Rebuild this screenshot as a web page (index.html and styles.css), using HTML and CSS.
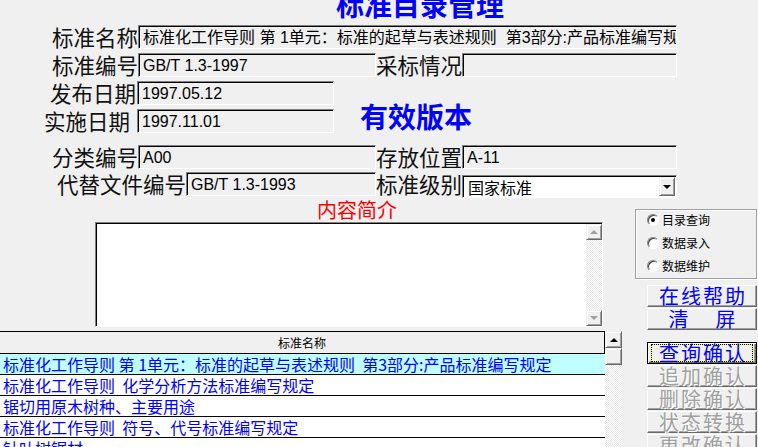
FILE: index.html
```html
<!DOCTYPE html>
<html lang="zh-CN">
<head>
<meta charset="utf-8">
<title>标准目录管理</title>
<link rel="stylesheet" href="styles.css">
</head>
<body>
<div class="form">
  <h1 class="title">标准目录管理</h1>

  <div class="row gap4">
    <span class="lbl w138">标准名称</span>
    <div class="field w539">标准化工作导则 第 1单元：标准的起草与表述规则  第3部分:产品标准编写规定</div>
  </div>

  <div class="row gap4">
    <span class="lbl w138">标准编号</span>
    <div class="field w238">GB/T 1.3-1997</div>
    <span class="lbl w86">采标情况</span>
    <div class="field w215"></div>
  </div>

  <div class="dates">
    <div class="date-col">
      <div class="row gap4">
        <span class="lbl w137 pr1">发布日期</span>
        <div class="field w197">1997.05.12</div>
      </div>
      <div class="row">
        <span class="lbl w137 pr7">实施日期</span>
        <div class="field w197">1997.11.01</div>
      </div>
    </div>
    <div class="subtitle">有效版本</div>
  </div>

  <div class="row gap3">
    <span class="lbl w138">分类编号</span>
    <div class="field w238">A00</div>
    <span class="lbl w86">存放位置</span>
    <div class="field w215">A-11</div>
  </div>

  <div class="row gap3">
    <span class="lbl w186">代替文件编号</span>
    <div class="field w190">GB/T 1.3-1993</div>
    <span class="lbl w86">标准级别</span>
    <div class="select">
      <span class="select-text">国家标准</span>
      <span class="select-btn"><i class="arrow-down"></i></span>
    </div>
  </div>

  <div class="lower">
    <div class="left">
      <div class="intro-title">内容简介</div>
      <div class="memo">
        <div class="memo-text"></div>
        <div class="vscroll memo-sb">
          <div class="sb-btn"><i class="arrow-up dis"></i></div>
          <div class="sb-track"></div>
          <div class="sb-btn"><i class="arrow-down dis"></i></div>
        </div>
      </div>
      <div class="grid-wrap">
        <div class="grid">
          <div class="grid-head">标准名称</div>
          <div class="grid-row sel">标准化工作导则 第 1单元：标准的起草与表述规则  第3部分:产品标准编写规定</div>
          <div class="grid-row">标准化工作导则  化学分析方法标准编写规定</div>
          <div class="grid-row">锯切用原木树种、主要用途</div>
          <div class="grid-row">标准化工作导则  符号、代号标准编写规定</div>
          <div class="grid-row">针叶树锯材</div>
        </div>
        <div class="vscroll grid-sb">
          <div class="sb-btn big"><i class="arrow-up"></i></div>
          <div class="sb-btn big"></div>
          <div class="sb-track"></div>
        </div>
      </div>
    </div>

    <div class="right">
      <div class="radio-group">
        <div class="radios">
          <div class="radio"><span class="radio-dot on"></span>目录查询</div>
          <div class="radio"><span class="radio-dot"></span>数据录入</div>
          <div class="radio"><span class="radio-dot"></span>数据维护</div>
        </div>
      </div>
      <div class="btns">
        <div class="btn"><span class="btn-text">在线帮助</span></div>
        <div class="btn split"><span>清</span><span>屏</span></div>
        <div class="btn default mt11"><span class="focus"><span class="btn-text">查询确认</span></span></div>
        <div class="btn disabled"><span class="btn-text">追加确认</span></div>
        <div class="btn disabled"><span class="btn-text">删除确认</span></div>
        <div class="btn disabled"><span class="btn-text">状态转换</span></div>
        <div class="btn disabled"><span class="btn-text">更改确认</span></div>
      </div>
    </div>
  </div>
</div>
</body>
</html>
```

FILE: styles.css
```css
* { box-sizing: border-box; }
html, body { margin: 0; padding: 0; }
body {
  background: #f0f0f0;
  font-family: "Noto Sans CJK SC", "Liberation Sans", sans-serif;
  color: #000;
}
.form { width: 758px; height: 447px; overflow: hidden; }

.title {
  margin: -10px 0 0 0;
  height: 35px;
  padding-left: 336px;
  font-size: 28px;
  line-height: 28px;
  font-weight: bold;
  color: #0000ff;
}

.row { display: flex; align-items: center; height: 24px; }
.gap4 { margin-bottom: 4px; }
.gap3 { margin-bottom: 3px; }

.lbl {
  flex: none;
  font-size: 21.5px;
  line-height: 24px;
  text-align: right;
  white-space: nowrap;
  color: #111;
}
.w138 { width: 138px; }
.w137 { width: 137px; }
.w186 { width: 186px; }
.w86 { width: 86px; }
.pr1 { padding-right: 1px; }
.pr7 { padding-right: 7px; }

.field {
  flex: none;
  height: 24px;
  border: 1px solid;
  border-color: #808080 #fff #fff #808080;
  box-shadow: inset 1px 1px 0 #000;
  font-family: "Liberation Sans", "Noto Sans CJK SC", sans-serif;
  font-size: 16px;
  line-height: 21px;
  padding: 1px 0 0 4px;
  white-space: pre;
  overflow: hidden;
}
.w539 { width: 539px; }
.w238 { width: 238px; }
.w215 { width: 215px; }
.w197 { width: 197px; }
.w190 { width: 190px; }

.dates { display: flex; margin-bottom: 12px; }
.date-col { flex: none; }
.subtitle {
  margin: 21px 0 0 26px;
  font-size: 28px;
  line-height: 28px;
  font-weight: bold;
  color: #0000ff;
}

.select {
  flex: none;
  align-self: flex-start;
  margin-top: 3px;
  width: 215px;
  height: 23px;
  border: 1px solid;
  border-color: #808080 #fff #fff #808080;
  box-shadow: inset 1px 1px 0 #000;
  background: #fff;
  display: flex;
  align-items: stretch;
  padding: 1px;
}
.select-text {
  flex: 1;
  font-size: 16px;
  line-height: 20px;
  padding-left: 4px;
}
.select-btn {
  width: 16px;
  background: #f0f0f0;
  border: 1px solid;
  border-color: #f0f0f0 #696969 #696969 #f0f0f0;
  box-shadow: inset 1px 1px 0 #fff, inset -1px -1px 0 #a0a0a0;
  display: flex;
  align-items: center;
  justify-content: center;
}

.arrow-up, .arrow-down {
  display: block;
  width: 0;
  height: 0;
  border-left: 4px solid transparent;
  border-right: 4px solid transparent;
}
.arrow-up { border-bottom: 4px solid #000; }
.arrow-down { border-top: 4px solid #000; }
.arrow-up.dis { border-bottom-color: #a0a0a0; }
.arrow-down.dis { border-top-color: #a0a0a0; }

.lower { display: flex; }
.left { width: 635px; flex: none; }
.right { width: 123px; flex: none; }

.intro-title {
  height: 23px;
  padding-left: 317px;
  font-size: 20px;
  line-height: 22px;
  color: #ff0000;
}

.memo {
  margin-left: 95px;
  width: 508px;
  height: 105px;
  border: 1px solid;
  border-color: #808080 #fff #fff #808080;
  box-shadow: inset 1px 1px 0 #000;
  background: #fff;
  display: flex;
  padding: 1px 0 0 1px;
}
.memo-text { flex: 1; }

.vscroll { display: flex; flex-direction: column; flex: none; }
.memo-sb { width: 16px; }
.sb-track {
  flex: 1;
  background: repeating-conic-gradient(#fff 0 25%, #e6e6e6 0 50%) 0 0 / 2px 2px;
}
.sb-btn {
  flex: none;
  height: 16px;
  background: #f0f0f0;
  border: 1px solid;
  border-color: #f0f0f0 #696969 #696969 #f0f0f0;
  box-shadow: inset 1px 1px 0 #fff, inset -1px -1px 0 #a0a0a0;
  display: flex;
  align-items: center;
  justify-content: center;
}
.sb-btn.big { height: 17px; }

.grid-wrap {
  margin-top: 4px;
  display: flex;
  width: 622px;
  height: 116px;
}
.grid {
  width: 605px;
  flex: none;
  border-top: 1px solid #000;
  background: #fff;
}
.grid-head {
  height: 22px;
  border-bottom: 1px solid #000;
  border-right: 1px solid #000;
  background: #f0f0f0;
  text-align: center;
  font-size: 12px;
  line-height: 21px;
}
.grid-row {
  height: 21px;
  border-bottom: 1px solid #000;
  font-size: 16px;
  line-height: 20px;
  color: #0000ff;
  padding-left: 3px;
  white-space: pre;
  overflow: hidden;
}
.grid-row.sel { background: #c0ffff; }
.grid-sb { width: 17px; }

.radio-group {
  margin-top: 10px;
  width: 122px;
  height: 70px;
  border: 1px solid #a0a0a0;
  box-shadow: inset 1px 1px 0 #fff, 1px 1px 0 #fff;
  padding-left: 11px;
}
.radios { margin-top: -2px; }
.radio {
  display: flex;
  align-items: center;
  height: 23px;
  font-size: 12px;
  gap: 3px;
}
.radio-dot {
  flex: none;
  width: 12px;
  height: 12px;
  border-radius: 50%;
  border: 1px solid;
  border-color: #808080 #fff #fff #808080;
  box-shadow: inset 1px 1px 0 #404040;
  background: #fff;
  display: flex;
  align-items: center;
  justify-content: center;
}
.radio-dot.on::after {
  content: "";
  width: 4px;
  height: 4px;
  border-radius: 50%;
  background: #000;
}

.btns {
  margin: 6px 0 0 12px;
  width: 110px;
  display: flex;
  flex-direction: column;
  gap: 1px;
}
.btn {
  flex: none;
  height: 22px;
  background: #f0f0f0;
  border: 1px solid;
  border-color: #fff #696969 #696969 #fff;
  box-shadow: inset -1px -1px 0 #a0a0a0;
  display: flex;
  align-items: center;
  justify-content: center;
  font-size: 20px;
  line-height: 20px;
  color: #0000ff;
  white-space: nowrap;
}
.btn-text { letter-spacing: 2px; padding-left: 2px; }
.btn.split { gap: 27px; }
.btn.mt11 { margin-top: 11px; }
.btn.default {
  border: 1px solid #000;
  box-shadow: inset 1px 1px 0 #fff, inset -1px -1px 0 #696969, inset -2px -2px 0 #a0a0a0;
  padding: 1px 3px;
  align-items: stretch;
}
.focus {
  flex: 1;
  border: 1px dotted #000;
  background: linear-gradient(#f0f0f0, #f0f0f0) padding-box, #ffff00 border-box;
  display: flex;
  align-items: center;
  justify-content: center;
}
.btn.disabled {
  color: #a0a0a0;
  text-shadow: 1px 1px 0 #fff;
}
```
